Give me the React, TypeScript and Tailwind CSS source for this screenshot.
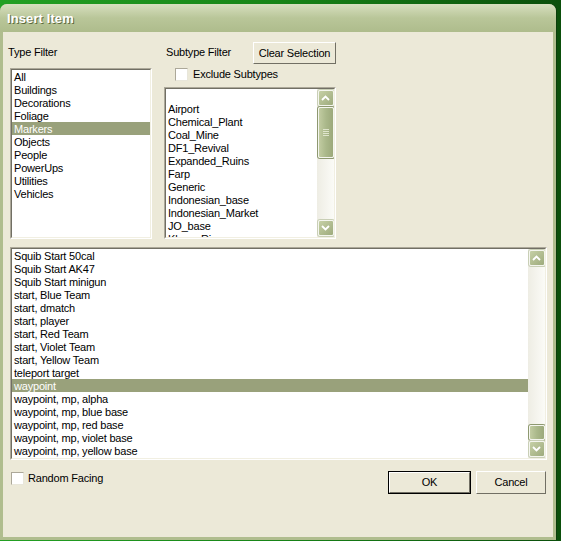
import React from "react";

const FONT = { fontFamily: '"Liberation Sans", Arial, sans-serif' };

const TYPES = ["All", "Buildings", "Decorations", "Foliage", "Markers", "Objects", "People", "PowerUps", "Utilities", "Vehicles"];

const SUBTYPES = [
  "",
  "Airport",
  "Chemical_Plant",
  "Coal_Mine",
  "DF1_Revival",
  "Expanded_Ruins",
  "Farp",
  "Generic",
  "Indonesian_base",
  "Indonesian_Market",
  "JO_base",
  "Klong_River",
];

const ITEMS = [
  "Squib Start 50cal",
  "Squib Start AK47",
  "Squib Start minigun",
  "start, Blue Team",
  "start, dmatch",
  "start, player",
  "start, Red Team",
  "start, Violet Team",
  "start, Yellow Team",
  "teleport target",
  "waypoint",
  "waypoint, mp, alpha",
  "waypoint, mp, blue base",
  "waypoint, mp, red base",
  "waypoint, mp, violet base",
  "waypoint, mp, yellow base",
];

function Sunken({ className, children }: { className: string; children: React.ReactNode }) {
  return (
    <div className={`border border-t-[#aca899] border-l-[#aca899] border-r-white border-b-white ${className}`}>
      <div className="h-full w-full overflow-hidden border border-t-[#716f64] border-l-[#716f64] border-r-[#f1efe2] border-b-[#f1efe2] bg-white">
        {children}
      </div>
    </div>
  );
}

function Row({ text, selected }: { text: string; selected?: boolean }) {
  return (
    <div
      className={`h-[13px] whitespace-nowrap pl-[2px] pt-[1px] text-[11px] leading-[12px] tracking-[-0.2px] ${
        selected ? "bg-[#99a17b] text-white" : "text-black"
      }`}
    >
      {text}
    </div>
  );
}

function ScrollButton({ up }: { up?: boolean }) {
  return (
    <div className="flex h-[16px] w-[16px] items-center justify-center rounded-[2px] border border-[#f4f5ee] bg-gradient-to-br from-[#c6d0a6] to-[#9eab7d] shadow-[0_0_0_1px_#c9cfb6]">
      <svg width="9" height="6" viewBox="0 0 9 6">
        <path
          d={up ? "M1 5 L4.5 1.5 L8 5" : "M1 1 L4.5 4.5 L8 1"}
          fill="none"
          stroke="#ffffff"
          strokeWidth="1.8"
        />
      </svg>
    </div>
  );
}

function Thumb({ h, grip }: { h: number; grip?: boolean }) {
  return (
    <div
      className="flex w-[16px] items-center justify-center rounded-[2px] border border-[#f4f5ee] bg-gradient-to-r from-[#c2cca2] via-[#aab88a] to-[#9ca97b] shadow-[0_0_0_1px_#8e9970]"
      style={{ height: h }}
    >
      {grip && (
        <div className="flex flex-col gap-[1px]">
          <div className="h-[1px] w-[6px] bg-[#dfe5cc]" />
          <div className="h-[1px] w-[6px] bg-[#dfe5cc]" />
          <div className="h-[1px] w-[6px] bg-[#dfe5cc]" />
          <div className="h-[1px] w-[6px] bg-[#dfe5cc]" />
        </div>
      )}
    </div>
  );
}

function Checkbox() {
  return <div className="h-[13px] w-[13px] border border-t-[#aca899] border-l-[#aca899] border-r-[#e8e6da] border-b-[#e8e6da] bg-white" />;
}

function Button({ label, w, def }: { label: string; w: number; def?: boolean }) {
  return (
    <div className={`h-[23px] ${def ? "border border-black" : ""}`} style={{ width: w }}>
      <div className="flex h-full w-full items-center justify-center border border-t-white border-l-white border-r-[#716f64] border-b-[#716f64] bg-[#ece9d8] text-[11px] tracking-[-0.2px] text-black">
        {label}
      </div>
    </div>
  );
}

export default function App() {
  return (
    <div
      className="h-[541px] w-[561px] overflow-hidden bg-gradient-to-r from-[#23a023] via-[#178417] to-[#0b4f0b] pt-[4px]"
      style={FONT}
    >
      <div className="w-[556px] overflow-hidden rounded-t-[7px] bg-[#b0bd8e] shadow-[1px_0_0_#0b3d0b]">
        {/* title bar */}
        <div className="flex h-[28px] items-center bg-gradient-to-b from-[#d7dfbf] via-[#b9c699] to-[#aebc8c] pl-[7px] pt-[1px]">
          <span className="text-[13px] font-bold tracking-[0.1px] text-white [text-shadow:1px_1px_0_#5d6a3e]">
            Insert Item
          </span>
        </div>

        {/* body */}
        <div className="mx-[3px] mb-[3px] h-[505px] bg-[#ece9d8] text-black">
          <div className="flex">
            {/* type filter */}
            <div className="ml-[7px] w-[142px]">
              <div className="-ml-[2px] pt-[14px] text-[11px] leading-[13px] tracking-[-0.2px]">Type Filter</div>
              <Sunken className="mt-[9px] h-[171px] w-[142px]">
                {TYPES.map((t) => (
                  <Row key={t} text={t} selected={t === "Markers"} />
                ))}
              </Sunken>
            </div>

            {/* subtype filter */}
            <div className="ml-[12px] w-[172px]">
              <div className="mt-[10px] flex h-[22px]">
                <div className="w-[91px] pl-[2px] pt-[4px] text-[11px] leading-[13px] tracking-[-0.2px]">Subtype Filter</div>
                <div className="h-[22px] w-[85px]">
                  <div className="flex h-full w-full items-center justify-center border border-t-white border-l-white border-r-[#716f64] border-b-[#716f64] text-[11px] tracking-[-0.2px]">
                    Clear Selection
                  </div>
                </div>
              </div>
              <div className="mt-[4px] flex h-[13px] items-center gap-[5px] pl-[11px]">
                <Checkbox />
                <span className="text-[11px] leading-[13px] tracking-[-0.2px]">Exclude Subtypes</span>
              </div>
              <Sunken className="mt-[6px] h-[152px] w-[172px]">
                <div className="flex h-full">
                  <div className="flex-1">
                    {SUBTYPES.map((s, i) => (
                      <Row key={i} text={s || "\u00a0"} />
                    ))}
                  </div>
                  <div className="flex w-[17px] flex-col items-center bg-gradient-to-r from-[#eeede4] to-[#fbfbf7] pt-[1px]">
                    <ScrollButton up />
                    <div className="mt-[1px]">
                      <Thumb h={51} grip />
                    </div>
                    <div className="flex-1" />
                    <div className="pb-[1px]">
                      <ScrollButton />
                    </div>
                  </div>
                </div>
              </Sunken>
            </div>
          </div>

          {/* items list */}
          <Sunken className="ml-[7px] mt-[8px] h-[213px] w-[537px]">
            <div className="flex h-full">
              <div className="flex-1">
                {ITEMS.map((t) => (
                  <Row key={t} text={t} selected={t === "waypoint"} />
                ))}
              </div>
              <div className="flex w-[17px] flex-col items-center bg-gradient-to-r from-[#eeede4] to-[#fbfbf7] pt-[1px]">
                <ScrollButton up />
                <div className="flex-1" />
                <Thumb h={15} />
                <div className="mt-[1px] pb-[1px]">
                  <ScrollButton />
                </div>
              </div>
            </div>
          </Sunken>

          {/* bottom row */}
          <div className="mt-[11px] flex items-start">
            <div className="ml-[8px] mt-[1px] flex items-center gap-[4px]">
              <Checkbox />
              <span className="text-[11px] leading-[13px] tracking-[-0.2px]">Random Facing</span>
            </div>
            <div className="ml-auto mr-[7px] flex gap-[5px]">
              <Button label="OK" w={83} def />
              <Button label="Cancel" w={70} />
            </div>
          </div>
        </div>
      </div>
    </div>
  );
}
